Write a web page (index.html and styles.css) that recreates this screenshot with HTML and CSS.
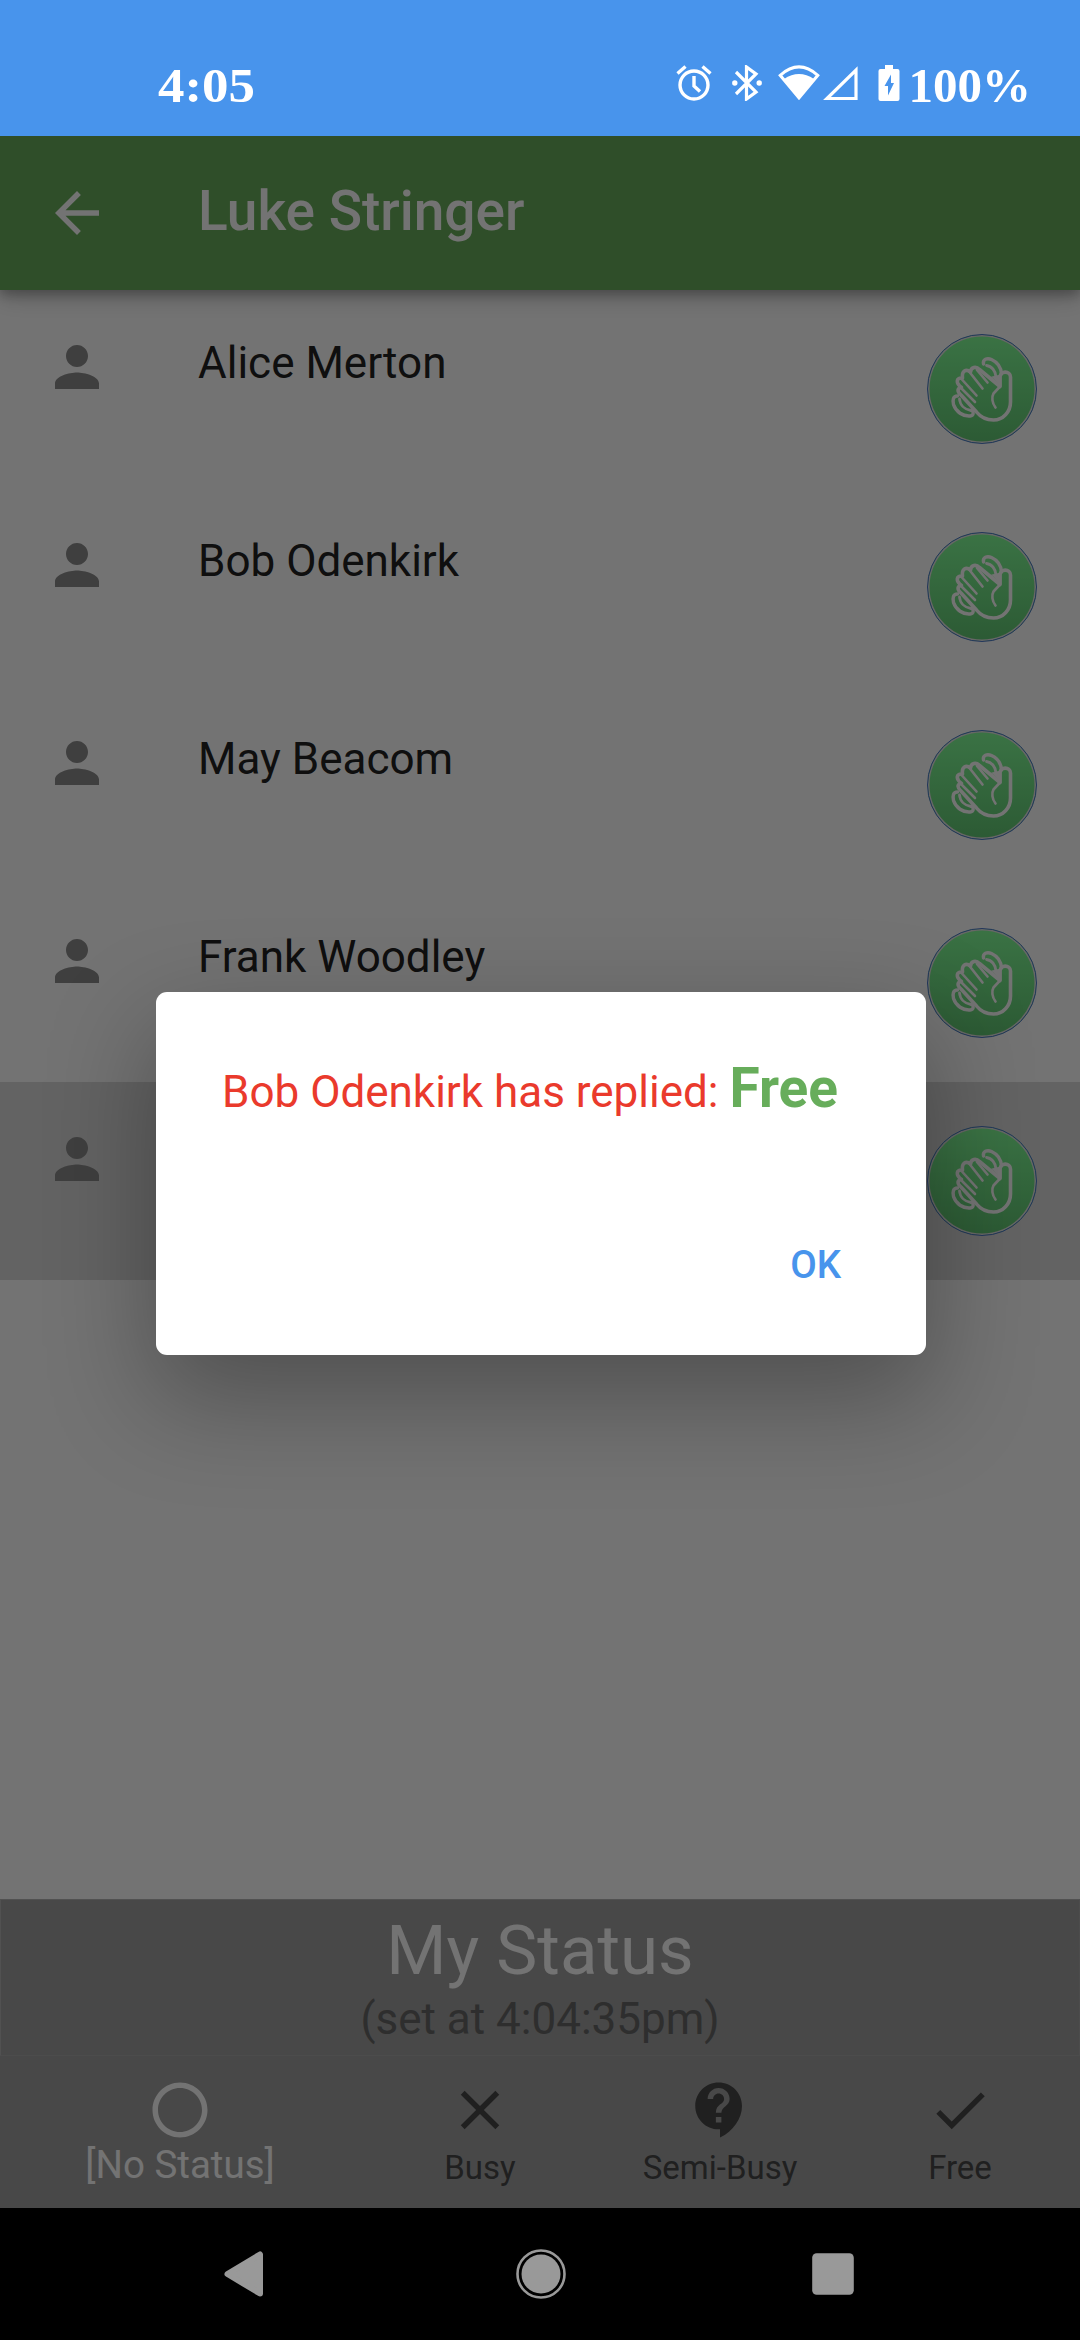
FILE: index.html
```
<!DOCTYPE html>
<html lang="en">
<head>
<meta charset="utf-8">
<title>Luke Stringer</title>
<link rel="stylesheet" href="styles.css">
</head>
<body>
<svg class="defs" width="0" height="0" aria-hidden="true">
  <symbol id="person" viewBox="0 0 24 24"><path d="M12 12c2.21 0 4-1.79 4-4s-1.79-4-4-4-4 1.79-4 4 1.79 4 4 4zm0 2c-2.67 0-8 1.34-8 4v2h16v-2c0-2.66-5.33-4-8-4z"/></symbol>
  <symbol id="wave" viewBox="0 0 110 110">
    <g fill="none" stroke="currentColor" stroke-linecap="round" stroke-linejoin="round">
      <path stroke-width="3.600" d="M73 52.500 V43 C73 36.500 83.500 36.500 83.500 43 V68 C83.500 78 76 86 66.500 86 C59 86 53.500 83 49.500 78 L34 61 C29.500 57 30.500 54 34.500 53.500 C28.500 49 29 43.500 35.500 44 C34.500 37 39 34.500 43.500 38 C44 33 49 32 52.500 35.500 L73 52.500"/>
      <path stroke-width="2.600" d="M50 36 L60.500 48.500 M42.500 38 L55.500 54.500 M34.500 45 L49.500 61.500 M34 54 L48 68 M73 52.500 L66.500 59.500 C64.500 63 65 69 68.500 73.500"/>
      <path fill="currentColor" stroke-width="1" d="M65 43 L74 41 V52Z"/>
      <path stroke-width="3.400" d="M56.500 30 C55.500 25.500 60 23.500 64.500 25.500 C70 28 74 33 74.500 40"/>
      <path stroke-width="2.800" d="M59.500 31.500 C64.500 32 68.500 36.500 69 43"/>
      <path stroke-width="3.400" d="M30.500 62 C26 62 25.500 66 26.500 70.500 C29 78 36 82.500 43 82 C47 81.500 47 78 44.500 76"/>
      <path stroke-width="2.800" d="M32.500 65 C33 71 37.500 75.500 44 76.500"/>
    </g>
  </symbol>
</svg>

<div class="screen">
  <header class="system-bar">
    <span class="clock">4:05</span>
    <div class="system-icons">
      <svg class="alarm" viewBox="0 0 36 36" fill="none" stroke="currentColor" stroke-width="3.400"><circle cx="18" cy="20" r="14"/><path d="M18 11v10l6 5.500M1.500 8.500l8-7M34.500 8.500l-8-7"/></svg>
      <svg class="bluetooth" viewBox="0 0 30 36" fill="none" stroke="currentColor" stroke-width="3.200"><path d="M4 7l20 20-9.500 7V2L24 9 4 29"/><circle cx="2.800" cy="18" r="2.700" fill="currentColor" stroke="none"/><circle cx="27.200" cy="18" r="2.700" fill="currentColor" stroke="none"/></svg>
      <svg class="wifi" viewBox="0 0 42 36"><path fill="none" stroke="currentColor" stroke-width="3" d="M2.200 10.300Q21-6.500 39.800 10.300L21 33Z"/><path fill="currentColor" d="M6 14Q21 4 36 14L21 34Z"/></svg>
      <svg class="signal" viewBox="0 0 36 36"><path fill="none" stroke="currentColor" stroke-width="3.200" d="M4 33.500H33V5Z"/></svg>
      <svg class="battery" viewBox="0 0 22 36"><path fill="currentColor" fill-rule="evenodd" d="M7 0h8v4h4.500a2 2 0 0 1 2 2v28a2 2 0 0 1-2 2H2.500a2 2 0 0 1-2-2V6a2 2 0 0 1 2-2H7zM13 9.500L6.500 21H10v9.500L16 18h-3z"/></svg>
      <span class="percent">100%</span>
    </div>
  </header>

  <main class="app">
    <div class="app-bar">
      <svg class="icon" viewBox="0 0 24 24"><path d="M20 11H7.830l5.590-5.590L12 4l-8 8 8 8 1.410-1.410L7.830 13H20v-2z"/></svg>
      <h1 class="app-title">Luke Stringer</h1>
    </div>

    <ul class="contacts">
      <li class="contact"><svg class="icon"><use href="#person"/></svg><span class="name">Alice Merton</span><span class="wave"><svg><use href="#wave"/></svg></span></li>
      <li class="contact"><svg class="icon"><use href="#person"/></svg><span class="name">Bob Odenkirk</span><span class="wave"><svg><use href="#wave"/></svg></span></li>
      <li class="contact"><svg class="icon"><use href="#person"/></svg><span class="name">May Beacom</span><span class="wave"><svg><use href="#wave"/></svg></span></li>
      <li class="contact"><svg class="icon"><use href="#person"/></svg><span class="name">Frank Woodley</span><span class="wave"><svg><use href="#wave"/></svg></span></li>
      <li class="contact selected"><svg class="icon"><use href="#person"/></svg><span class="name"></span><span class="wave"><svg><use href="#wave"/></svg></span></li>
    </ul>

    <section class="my-status">
      <h2 class="status-title">My Status</h2>
      <p class="status-time">(set at 4:04:35pm)</p>
    </section>

    <nav class="tabs">
      <div class="tab active"><svg class="icon" viewBox="0 0 24 24"><path d="M12 2C6.480 2 2 6.480 2 12s4.480 10 10 10 10-4.480 10-10S17.520 2 12 2zm0 18c-4.410 0-8-3.590-8-8s3.590-8 8-8 8 3.590 8 8-3.590 8-8 8z"/></svg><span>[No Status]</span></div>
      <div class="tab"><svg class="icon" viewBox="0 0 24 24"><path d="M19 6.410L17.590 5 12 10.590 6.410 5 5 6.410 10.590 12 5 17.590 6.410 19 12 13.410 17.590 19 19 17.590 13.410 12z"/></svg><span>Busy</span></div>
      <div class="tab"><svg class="icon" viewBox="0 0 24 24"><path d="M11.500 2C6.810 2 3 5.810 3 10.500S6.810 19 11.500 19h.5v3c4.860-2.340 8-7 8-11.500C20 5.810 16.190 2 11.500 2zm1 14.500h-2v-2h2v2zm0-3.500h-2c0-3.250 3-3 3-5 0-1.100-.9-2-2-2s-2 .9-2 2h-2c0-2.210 1.790-4 4-4s4 1.790 4 4c0 2.500-3 2.750-3 5z"/></svg><span>Semi-Busy</span></div>
      <div class="tab"><svg class="icon" viewBox="0 0 24 24"><path d="M9 16.200L4.800 12l-1.400 1.400L9 19 21 7l-1.400-1.400L9 16.200z"/></svg><span>Free</span></div>
    </nav>

    <div class="scrim">
      <div class="dialog" role="dialog">
        <p class="message">Bob Odenkirk has replied: <b>Free</b></p>
        <button class="ok" type="button">OK</button>
      </div>
    </div>
  </main>

  <footer class="nav-bar">
    <svg viewBox="0 0 60 60"><path d="M42 10.500V49.500L9.500 30Z" stroke-linejoin="round" stroke-width="6" stroke="currentColor" fill="currentColor"/></svg>
    <svg viewBox="0 0 60 60"><circle cx="30" cy="30" r="23.500" fill="none" stroke="currentColor" stroke-width="2.600"/><circle cx="30" cy="30" r="19.500" fill="currentColor"/></svg>
    <svg viewBox="0 0 60 60"><rect x="9.200" y="9.200" width="41.600" height="41.600" rx="4.500" fill="currentColor"/></svg>
  </footer>
</div>
</body>
</html>
```
FILE: styles.css
```
* { box-sizing: border-box; }

body {
  margin: 0;
  font-family: Roboto, "Noto Sans", sans-serif;
}

h1, h2, p, ul { margin: 0; padding: 0; font-weight: 400; }
svg { display: block; }
.defs { position: absolute; }

.screen {
  width: 1080px;
  height: 2340px;
  display: flex;
  flex-direction: column;
  overflow: hidden;
}

.system-bar {
  height: 136px;
  padding: 56px 49px 0 158px;
  display: flex;
  justify-content: space-between;
  align-items: flex-start;
  background: #4894ec;
  color: #fff;
  font: 700 49px/60px "Liberation Serif", serif;
}
.clock { transform: scaleX(1.08); transform-origin: left; }
.system-icons { display: flex; align-items: flex-start; }
.system-icons svg { height: 36px; margin-top: 9px; }
.alarm { width: 36px; margin-right: 20px; }
.bluetooth { width: 30px; margin-right: 16px; }
.wifi { width: 42px; margin-right: 3px; }
.signal { width: 36px; margin-right: 19px; }
.battery { width: 22px; margin-right: 9px; }

.app {
  flex: 1;
  display: flex;
  flex-direction: column;
  position: relative;
  overflow: hidden;
  background: #fff;
}

.icon { width: 66px; height: 66px; flex: none; fill: currentColor; }

.app-bar {
  height: 154px;
  padding: 0 44px;
  display: flex;
  align-items: center;
  gap: 88px;
  background: #68ad5b;
  color: #fff;
  box-shadow: 0 5px 11px rgba(0, 0, 0, .25), 0 6px 24px rgba(0, 0, 0, .2);
  z-index: 1;
}
.app-title { margin-top: -4px; font-size: 55px; font-weight: 500; line-height: 66px; }

.contacts { flex: 1; list-style: none; }
.contact {
  height: 198px;
  padding: 44px 43px 44px 44px;
  display: flex;
  align-items: flex-start;
  color: #8c8c8c;
}
.contact.selected { background: #dcdcdc; }
.name {
  flex: 1;
  margin: 3px 0 0 88px;
  font-size: 44px;
  line-height: 52px;
  color: #222;
}
.wave {
  width: 110px;
  height: 110px;
  border-radius: 50%;
  border: 1.5px solid #4a78c8;
  background: linear-gradient(#82ff98, #62c874) border-box;
  box-shadow: inset 0 0 0 1.5px #e4e4e4;
  color: #fff;
}
.wave svg { width: 110px; height: 110px; margin: -1px; }

.my-status {
  height: 157px;
  padding-top: 11px;
  border: 1px solid #a9a9a9;
  border-top-color: #b4b4b4;
  border-left-color: #b4b4b4;
  background: #a0a0a0;
  text-align: center;
}
.status-title { font-size: 69px; line-height: 80px; color: #fff; }
.status-time { margin-top: 2px; font-size: 44px; line-height: 52px; color: #666; }

.tabs {
  height: 152px;
  display: grid;
  grid-template-columns: 3fr 2fr 2fr 2fr;
  background: #a0a0a0;
}
.tab {
  display: flex;
  flex-direction: column;
  align-items: center;
  padding-top: 21px;
  font-size: 33px;
  line-height: 40px;
  color: #484848;
}
.tab span { margin-top: 5px; }
.tab.active { font-size: 38.5px; color: #fff; }
.tab.active span { margin-top: 2px; }

.scrim {
  position: absolute;
  inset: 0;
  z-index: 2;
  display: flex;
  justify-content: center;
  align-items: center;
  background: rgba(0, 0, 0, .55);
}
.dialog {
  width: 770px;
  height: 363px;
  margin: 2px 0 0 2px;
  padding: 68px 66px 65px;
  display: flex;
  flex-direction: column;
  justify-content: space-between;
  align-items: flex-end;
  border-radius: 11px;
  background: #fff;
  box-shadow: 0 40px 105px 4px rgba(0, 0, 0, .3);
}
.message {
  align-self: stretch;
  font-size: 44px;
  line-height: 64px;
  white-space: nowrap;
  color: #ea3a2c;
}
.message b { font-size: 55px; line-height: 1; color: #67ad5b; }
.ok {
  padding: 0 19px 0 0;
  border: 0;
  background: none;
  font: 500 38.5px/50px Roboto, sans-serif;
  color: #4894ec;
}

.nav-bar {
  height: 132px;
  padding: 0 217px 0 218px;
  display: flex;
  justify-content: space-between;
  align-items: center;
  background: #000;
  color: #999;
}
.nav-bar svg { width: 60px; height: 60px; }
```
